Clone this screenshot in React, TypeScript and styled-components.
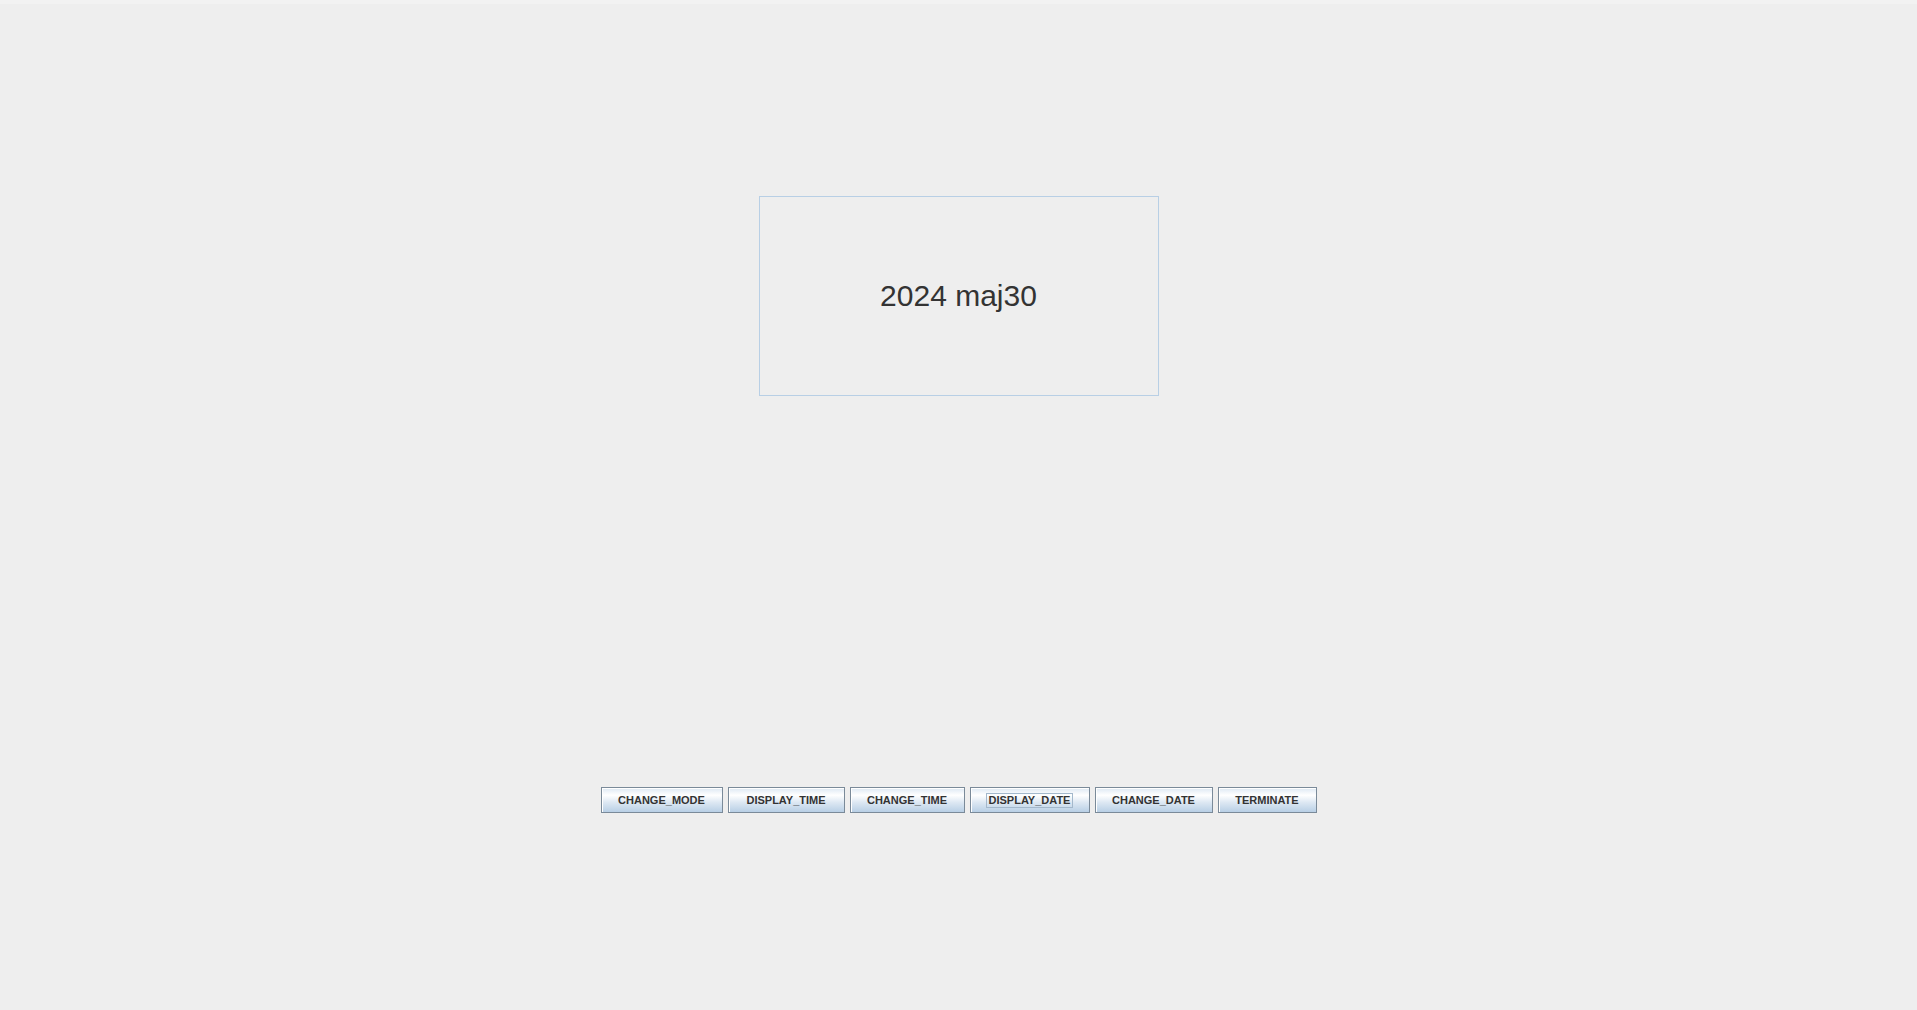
import React from "react";
import styled, { createGlobalStyle } from "styled-components";

const GlobalStyle = createGlobalStyle`
  html, body {
    margin: 0;
    padding: 0;
    background: #eeeeee;
  }
  body {
    font-family: "Liberation Sans", Arial, sans-serif;
  }
`;

const Frame = styled.div`
  width: 1917px;
  height: 1010px;
  background: #eeeeee;
  border-top: 4px solid #f2f2f2;
  box-sizing: border-box;
  display: flex;
  flex-direction: column;
  align-items: center;
  padding-top: 192px;
`;

const Display = styled.div`
  width: 400px;
  height: 200px;
  box-sizing: border-box;
  border: 1px solid #b8cfe5;
  display: flex;
  align-items: center;
  justify-content: center;
  font-family: "Liberation Sans", Arial, sans-serif;
  font-size: 30px;
  color: #333333;
`;

const ButtonRow = styled.div`
  margin-top: 391px;
  display: flex;
  gap: 5px;
`;

const Button = styled.button<{ $w: number }>`
  width: ${(p) => p.$w}px;
  height: 26px;
  box-sizing: border-box;
  padding: 0;
  margin: 0;
  border: 1px solid #7a8a99;
  box-shadow: inset 1px 1px 0 #ffffff;
  background: linear-gradient(
    to bottom,
    #dde8f3 0%,
    #ffffff 30%,
    #dde8f3 60%,
    #b8cfe5 100%
  );
  font-family: "Liberation Sans", Arial, sans-serif;
  font-weight: bold;
  font-size: 11px;
  color: #333333;
  display: flex;
  align-items: center;
  justify-content: center;
  cursor: default;
`;

const Label = styled.span<{ $focused?: boolean }>`
  padding: 1px 2px;
  line-height: 11px;
  outline: ${(p) => (p.$focused ? "1px solid #a3b8cc" : "none")};
`;

const buttons: { label: string; w: number; focused?: boolean }[] = [
  { label: "CHANGE_MODE", w: 122 },
  { label: "DISPLAY_TIME", w: 117 },
  { label: "CHANGE_TIME", w: 115 },
  { label: "DISPLAY_DATE", w: 120, focused: true },
  { label: "CHANGE_DATE", w: 118 },
  { label: "TERMINATE", w: 99 },
];

export default function App() {
  return (
    <>
      <GlobalStyle />
      <Frame>
        <Display>2024 maj30</Display>
        <ButtonRow>
          {buttons.map((b) => (
            <Button key={b.label} $w={b.w}>
              <Label $focused={b.focused}>{b.label}</Label>
            </Button>
          ))}
        </ButtonRow>
      </Frame>
    </>
  );
}
